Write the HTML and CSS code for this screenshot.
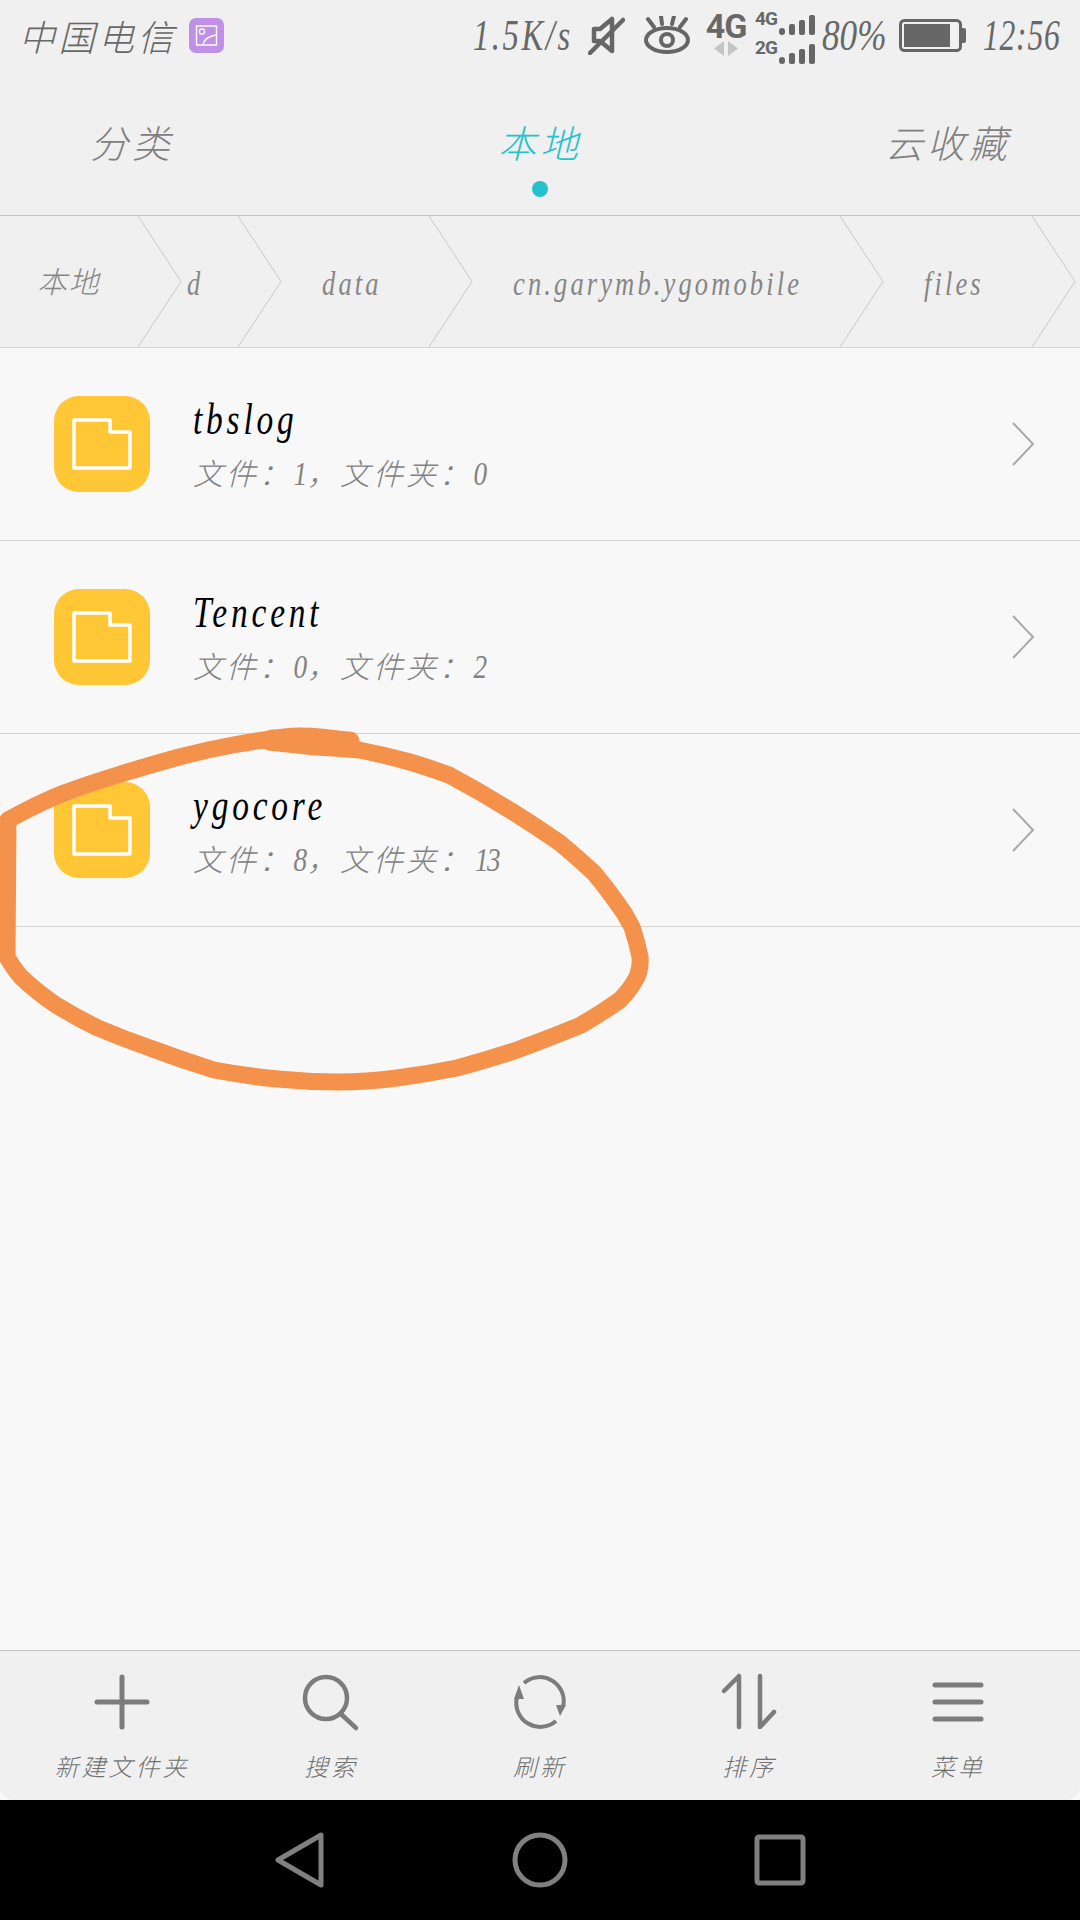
FILE: index.html
```html
<!DOCTYPE html>
<html lang="zh">
<head>
    <meta charset="UTF-8">
    <meta name="viewport" content="width=device-width, initial-scale=1.0">
    <title>文件管理</title>
    <link rel="stylesheet" href="styles.css">
</head>
<body>

<div id="page">
    <!-- Barra di stato -->
    <div class="status">
        <span class="carrier">中国电信</span>
        <svg class="badge" width="35" height="35" viewBox="0 0 35 35">
            <rect width="35" height="35" rx="7" fill="#c08fe6"/>
            <rect x="7.5" y="8" width="20" height="19" fill="none" stroke="#fff" stroke-width="1.4"/>
            <circle cx="13" cy="13.5" r="2.6" fill="none" stroke="#fff" stroke-width="1.3"/>
            <path d="M14 27 C15 21 20 18 27.5 17" fill="none" stroke="#fff" stroke-width="1.4"/>
        </svg>
        <div class="status-right">
            <span class="st speed"><span class="squeeze">1.5K/s</span></span>
            <svg class="st mute" width="37" height="40" viewBox="0 0 37 40" fill="none" stroke="#666" stroke-width="4.500">
                <path d="M6 26 V14 H12 L24 4 V36 L12 26 Z" stroke-linejoin="round"/>
                <path d="M2 38 L35 5" stroke-linecap="round"/>
            </svg>
            <svg class="st eye" width="46" height="38" viewBox="0 0 46 38" fill="none" stroke="#666" stroke-width="4">
                <ellipse cx="23" cy="24" rx="21" ry="12"/>
                <circle cx="23" cy="24" r="6"/>
                <path d="M4 3 L10 11 M17 0 L18 8 M30 0 L28 8 M42 3 L36 11" stroke-linecap="round"/>
            </svg>
            <div class="st net">
                <span class="net-big">4G</span>
                <svg width="24" height="15" viewBox="0 0 24 15" fill="#c4c4c4">
                    <path d="M10 0 V15 L0 7.5 Z M14 0 V15 L24 7.5 Z"/>
                </svg>
            </div>
            <div class="st sim">
                <div class="sim-row">
                    <span>4G</span>
                    <svg width="36" height="20" viewBox="0 0 36 20" fill="#666"><rect y="13" width="6" height="7" rx="3"/><rect x="10" y="9" width="6" height="11" rx="2"/><rect x="20" y="5" width="6" height="15" rx="2"/><rect x="30" width="6" height="20" rx="2"/></svg>
                </div>
                <div class="sim-row">
                    <span>2G</span>
                    <svg width="36" height="20" viewBox="0 0 36 20" fill="#666"><rect y="13" width="6" height="7" rx="3"/><rect x="10" y="9" width="6" height="11" rx="2"/><rect x="20" y="5" width="6" height="15" rx="2"/><rect x="30" width="6" height="20" rx="2"/></svg>
                </div>
            </div>
            <span class="st percent"><span class="squeeze">80%</span></span>
            <svg class="st battery" width="67" height="33" viewBox="0 0 67 33">
                <rect x="1.5" y="1.5" width="60" height="30" rx="4" fill="none" stroke="#666" stroke-width="3"/>
                <rect x="5" y="5" width="46" height="23" fill="#666"/>
                <path d="M63 9 H65 Q67 9 67 11 V22 Q67 24 65 24 H63 Z" fill="#666"/>
            </svg>
            <span class="st clock"><span class="squeeze">12:56</span></span>
        </div>
    </div>

    <!-- Schede -->
    <div class="tabs">
        <div class="tab">分类</div>
        <div class="tab active">本地<i class="tab-dot"></i></div>
        <div class="tab">云收藏</div>
    </div>

    <!-- Percorso -->
    <div class="crumbs">
        <div class="crumb crumb-cjk">本地<svg class="crumb-arrow" width="44" height="131" viewBox="0 0 44 131"><path d="M0 0 L43 65.500 L0 131"/></svg></div>
        <div class="crumb crumb-tight"><span class="squeeze">d</span><svg class="crumb-arrow" width="44" height="131" viewBox="0 0 44 131"><path d="M0 0 L43 65.500 L0 131"/></svg></div>
        <div class="crumb"><span class="squeeze">data</span><svg class="crumb-arrow" width="44" height="131" viewBox="0 0 44 131"><path d="M0 0 L43 65.500 L0 131"/></svg></div>
        <div class="crumb"><span class="squeeze">cn.garymb.ygomobile</span><svg class="crumb-arrow" width="44" height="131" viewBox="0 0 44 131"><path d="M0 0 L43 65.500 L0 131"/></svg></div>
        <div class="crumb"><span class="squeeze">files</span><svg class="crumb-arrow" width="44" height="131" viewBox="0 0 44 131"><path d="M0 0 L43 65.500 L0 131"/></svg></div>
    </div>

    <!-- Elenco cartelle -->
    <div class="list">
        <div class="row">
            <svg class="folder" width="96" height="96" viewBox="0 0 96 96"><rect width="96" height="96" rx="25" fill="#ffc635"/><path d="M20 24 H56 V36 H76 V72 H20 Z" fill="none" stroke="#fff" stroke-width="3.500" stroke-linejoin="round"/></svg>
            <div class="row-text">
                <div class="row-name"><span class="squeeze">tbslog</span></div>
                <div class="row-meta">文件：<span class="num">1</span>，文件夹：<span class="num">0</span></div>
            </div>
            <svg class="row-arrow" width="24" height="44" viewBox="0 0 24 44"><path d="M2 1 L22 22 L2 43"/></svg>
        </div>
        <div class="row">
            <svg class="folder" width="96" height="96" viewBox="0 0 96 96"><rect width="96" height="96" rx="25" fill="#ffc635"/><path d="M20 24 H56 V36 H76 V72 H20 Z" fill="none" stroke="#fff" stroke-width="3.500" stroke-linejoin="round"/></svg>
            <div class="row-text">
                <div class="row-name"><span class="squeeze">Tencent</span></div>
                <div class="row-meta">文件：<span class="num">0</span>，文件夹：<span class="num">2</span></div>
            </div>
            <svg class="row-arrow" width="24" height="44" viewBox="0 0 24 44"><path d="M2 1 L22 22 L2 43"/></svg>
        </div>
        <div class="row">
            <svg class="folder" width="96" height="96" viewBox="0 0 96 96"><rect width="96" height="96" rx="25" fill="#ffc635"/><path d="M20 24 H56 V36 H76 V72 H20 Z" fill="none" stroke="#fff" stroke-width="3.500" stroke-linejoin="round"/></svg>
            <div class="row-text">
                <div class="row-name"><span class="squeeze">ygocore</span></div>
                <div class="row-meta">文件：<span class="num">8</span>，文件夹：<span class="num">13</span></div>
            </div>
            <svg class="row-arrow" width="24" height="44" viewBox="0 0 24 44"><path d="M2 1 L22 22 L2 43"/></svg>
        </div>
    </div>

    <!-- Barra inferiore -->
    <div class="toolbar">
        <div class="tool">
            <svg width="60" height="60" viewBox="0 0 60 60" fill="none" stroke="#7c7c7c" stroke-width="5" stroke-linecap="round"><path d="M30 5 V55 M5 30 H55"/></svg>
            <span>新建文件夹</span>
        </div>
        <div class="tool">
            <svg width="60" height="60" viewBox="0 0 60 60" fill="none" stroke="#7c7c7c" stroke-width="4.500" stroke-linecap="round"><circle cx="25" cy="26" r="21"/><path d="M40 42 L55 56"/></svg>
            <span>搜索</span>
        </div>
        <div class="tool">
            <svg width="60" height="60" viewBox="0 0 60 60" fill="none" stroke="#7c7c7c" stroke-width="4"><path d="M7 25 A24 24 0 0 0 46 49"/><path d="M53 35 A24 24 0 0 0 14 11"/><path d="M4 27 L9 13 L14 27 Z M46 33 L56 33 L50 44 Z" fill="#7c7c7c" stroke="none"/></svg>
            <span>刷新</span>
        </div>
        <div class="tool">
            <svg width="60" height="60" viewBox="0 0 60 60" fill="none" stroke="#7c7c7c" stroke-width="4.500" stroke-linecap="round" stroke-linejoin="round"><path d="M5 19 L20 4 V55"/><path d="M41 4 V55 L55 40"/></svg>
            <span>排序</span>
        </div>
        <div class="tool">
            <svg width="60" height="60" viewBox="0 0 60 60" fill="none" stroke="#7c7c7c" stroke-width="5" stroke-linecap="round"><path d="M7 13 H53 M7 30 H53 M7 47 H53"/></svg>
            <span>菜单</span>
        </div>
    </div>

    <!-- Tasti di navigazione -->
    <div class="nav">
        <svg width="60" height="60" viewBox="0 0 60 60" fill="none" stroke="#808080" stroke-width="5" stroke-linejoin="round"><path d="M8 30 L51 5 V55 Z"/></svg>
        <svg width="60" height="60" viewBox="0 0 60 60" fill="none" stroke="#808080" stroke-width="5"><circle cx="30" cy="30" r="25"/></svg>
        <svg width="60" height="60" viewBox="0 0 60 60" fill="none" stroke="#808080" stroke-width="5" stroke-linejoin="round"><rect x="7" y="7" width="46" height="46" rx="2"/></svg>
    </div>

    <!-- Segno a mano sopra la schermata -->
    <svg class="scribble" width="1080" height="1920" viewBox="0 0 1080 1920" fill="none" stroke="#f4924c" stroke-linecap="round" stroke-linejoin="round">
        <path stroke-width="17" d="M350 741 Q308 734 284.500 737 Q261 740 233 745 Q205 750 177.500 757.500 Q150 765 117.500 775 Q85 785 63 793.500 Q41 802 8 820 L7 957 Q14 969 21 977 Q38 993 56 1005 Q77 1018 98 1028 Q124 1039 150 1048 Q182 1060 214 1070 Q246 1076 278 1079 Q308 1082 338 1082 Q367 1082 397 1078 Q427 1074 457 1068 Q487 1060 517 1050 Q549 1038 581 1025 Q602 1013 620 1000 Q630 990 637 977 Q641 967 640 957 Q637 942 632 927 Q625 913 615 900 Q605 886 594 873 Q578 858 560 843 Q537 827 513 812 Q481 792 449 775 Q430 768 410 762 Q385 755 359 750 Q338 748 316 747 L269 742"/>
        <path stroke-width="19" d="M272 739 L350 741"/>
    </svg>
</div>

</body>
</html>
```

FILE: styles.css
```css
* {
    box-sizing: border-box;
}

body {
    margin: 0;
    width: 1080px;
    height: 1920px;
    overflow: hidden;
    font-family: "Liberation Serif", "Noto Sans CJK SC", serif;
    font-style: italic;
    font-weight: 300;
    background-color: #f8f8f8;
}

#page {
    position: relative;
    display: flex;
    flex-direction: column;
    width: 1080px;
    height: 1920px;
    overflow: hidden;
}

.squeeze {
    display: inline-block;
    transform: scaleX(0.78);
    transform-origin: left center;
    white-space: nowrap;
}

/* Barra di stato */
.status {
    display: flex;
    align-items: center;
    height: 80px;
    padding: 0 19px 10px 19px;
    background-color: #f0f0f0;
    color: #686868;
}

.carrier {
    font-size: 36px;
    letter-spacing: 3.500px;
}

.badge {
    margin-left: 12px;
}

.status-right {
    display: flex;
    align-items: center;
    margin-left: auto;
}

.st {
    flex: none;
}

.speed, .percent, .clock {
    font-size: 44px;
    line-height: 44px;
    padding-top: 2px;
}

.speed {
    width: 101px;
}

.speed .squeeze {
    transform: scaleX(0.74);
    letter-spacing: 3.500px;
}

.mute {
    margin-left: 14px;
}

.eye {
    margin-left: 19px;
}

.net {
    display: flex;
    flex-direction: column;
    align-items: center;
    width: 40px;
    margin-left: 16px;
    margin-top: -4px;
}

.net-big, .sim-row span {
    font-family: "Roboto", sans-serif;
    font-style: normal;
    font-weight: 700;
}

.net-big {
    font-size: 34px;
    line-height: 30px;
    letter-spacing: -1px;
}

.sim {
    margin-left: 9px;
}

.sim-row {
    display: flex;
    align-items: flex-end;
    width: 60px;
    height: 29px;
    font-size: 19px;
    line-height: 20px;
    letter-spacing: -1px;
}

.sim-row svg {
    margin-left: -1px;
}

.sim-row span {
    width: 25px;
    margin-bottom: 6px;
}

.percent {
    width: 64px;
    margin-left: 7px;
}

.percent .squeeze {
    transform: scaleX(0.8);
}

.battery {
    margin-left: 13px;
}

.clock {
    width: 78px;
    margin-left: 17px;
}

.clock .squeeze {
    transform: scaleX(0.72);
    letter-spacing: 1px;
}

/* Schede */
.tabs {
    display: grid;
    grid-template-columns: repeat(3, 408px);
    justify-content: center;
    height: 136px;
    padding-top: 44px;
    background-color: #f0f0f0;
    border-bottom: 1px solid #c4c4c4;
    font-size: 38px;
    line-height: 42px;
    letter-spacing: 4px;
    color: #808080;
}

.tab {
    display: flex;
    flex-direction: column;
    align-items: center;
}

.tab.active {
    color: #26c2cc;
}

.tab-dot {
    width: 16px;
    height: 16px;
    margin-top: 15px;
    border-radius: 50%;
    background-color: #26c2cc;
}

/* Percorso */
.crumbs {
    display: grid;
    grid-template-columns: 181px 100px 191px 411px 192px 5px;
    height: 132px;
    background-color: #f0f0f0;
    border-bottom: 1px solid #d6d6d6;
    font-size: 34px;
    letter-spacing: 4px;
    color: #868686;
}

.crumb {
    position: relative;
    display: flex;
    align-items: center;
    padding-left: 41px;
    padding-top: 4px;
}

.crumb-cjk {
    padding-left: 37px;
    padding-top: 0;
    padding-bottom: 4px;
    font-size: 30px;
    letter-spacing: 1.500px;
}

.crumb-tight {
    padding-left: 6px;
}

.crumb-arrow {
    position: absolute;
    top: 0;
    right: -1px;
    fill: none;
    stroke: #c8c8c8;
    stroke-width: 1;
}

/* Elenco cartelle */
.list {
    flex: 1;
}

.row {
    display: flex;
    align-items: center;
    height: 193px;
    padding: 0 45px 0 54px;
    border-bottom: 1px solid #d4d4d4;
}

.folder {
    flex: none;
}

.row-text {
    flex: 1;
    margin-left: 43px;
}

.row-name {
    height: 50px;
    font-size: 44px;
    line-height: 50px;
    color: #000;
}

.row-name .squeeze {
    transform: scaleX(0.76);
    letter-spacing: 5px;
}

.row-meta {
    margin-top: 11px;
    font-size: 30px;
    line-height: 36px;
    letter-spacing: 3px;
    color: #828282;
}

.num {
    display: inline-block;
    font-size: 34px;
    letter-spacing: -2px;
    transform: scaleX(0.8);
}

.row-arrow {
    fill: none;
    stroke: #a8a8a8;
    stroke-width: 2;
}

/* Barra inferiore */
.toolbar {
    display: grid;
    grid-template-columns: repeat(5, 209px);
    justify-content: center;
    height: 150px;
    padding-top: 21px;
    background-color: #f0f0f0;
    border-top: 1px solid #c4c4c4;
    border-radius: 0 0 14px 14px;
}

.tool {
    display: flex;
    flex-direction: column;
    align-items: center;
    font-size: 24px;
    line-height: 28px;
    letter-spacing: 3px;
    color: #707070;
}

.tool span {
    margin-top: 22px;
}

/* Tasti di navigazione */
.nav {
    display: grid;
    grid-template-columns: repeat(3, 240px);
    justify-content: center;
    justify-items: center;
    align-items: center;
    height: 120px;
    background-color: #000;
}

.scribble {
    position: absolute;
    top: 0;
    left: 0;
}
```
